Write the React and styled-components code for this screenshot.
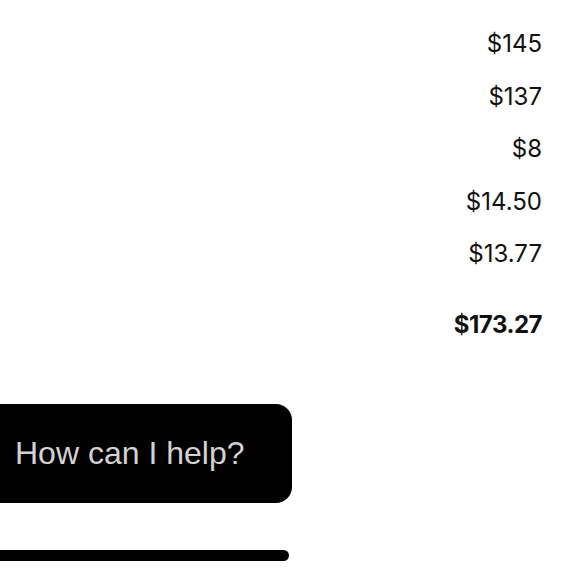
import React from "react";
import styled, { createGlobalStyle } from "styled-components";

const Global = createGlobalStyle`
  html, body { margin: 0; padding: 0; background: #ffffff; }
  body { width: 580px; height: 580px; overflow: hidden; }
`;

const Page = styled.div`
  width: 580px;
  height: 580px;
  display: flex;
  flex-direction: column;
  box-sizing: border-box;
  padding-top: 18px;
  overflow: hidden;
`;

const Prices = styled.div`
  display: flex;
  flex-direction: column;
  align-items: flex-end;
  padding-right: 38px;
  font-family: Inter, "Noto Sans", sans-serif;
  color: #111111;
`;

const Price = styled.div`
  font-size: 24px;
  line-height: 52.5px;
  font-weight: ${(p) => (p.$total ? 700 : 400)};
  margin-top: ${(p) => (p.$total ? "18.5px" : "0")};
  letter-spacing: ${(p) => (p.$total ? "-0.5px" : "0")};
`;

const Bubble = styled.div`
  margin-top: 52.5px;
  margin-left: -24px;
  width: 316px;
  height: 99px;
  box-sizing: border-box;
  background: #000000;
  border-radius: 16px;
  display: flex;
  align-items: center;
  padding-left: 39px;
  font-family: "Liberation Sans", Arial, sans-serif;
  font-size: 32px;
  color: #d2d2d2;
`;

const Bar = styled.div`
  margin-top: 47px;
  margin-left: -20px;
  width: 309px;
  height: 11px;
  background: #000000;
  border-radius: 6px;
`;

const items = ["$145", "$137", "$8", "$14.50", "$13.77"];

export default function App() {
  return (
    <>
      <Global />
      <Page>
        <Prices>
          {items.map((t) => (
            <Price key={t}>{t}</Price>
          ))}
          <Price $total>$173.27</Price>
        </Prices>
        <Bubble>How can I help?</Bubble>
        <Bar />
      </Page>
    </>
  );
}
